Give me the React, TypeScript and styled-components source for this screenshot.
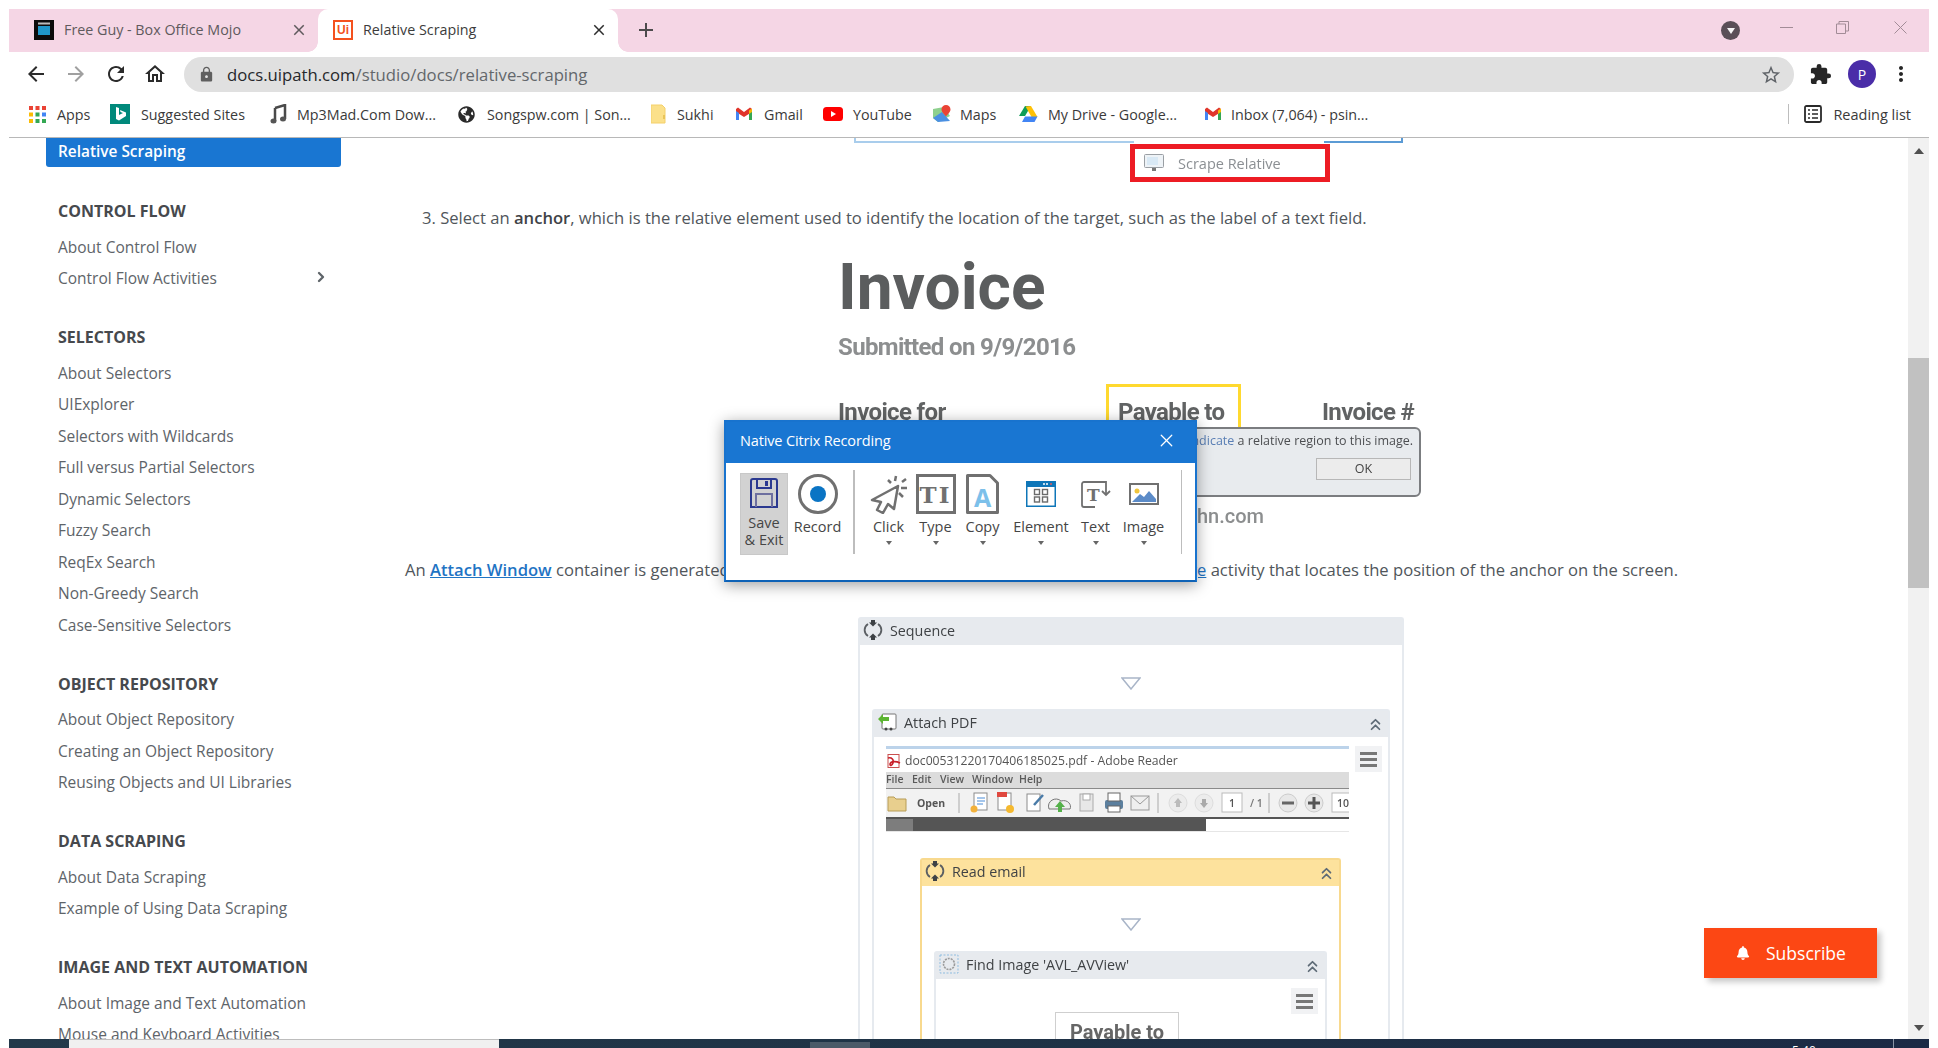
import React from 'react';
import styled, { createGlobalStyle } from 'styled-components';
import {
  MdArrowBack, MdArrowForward, MdRefresh, MdOutlineHome, MdLock, MdStarBorder,
  MdExtension, MdMoreVert, MdAdd, MdClose,
} from 'react-icons/md';
import { FaBell, FaGlobeAmericas } from 'react-icons/fa';
import { ChevronsUp, X, ChevronRight } from 'lucide-react';

const UI = '"Open Sans", "Noto Sans", sans-serif';

const Global = createGlobalStyle`
  html, body { margin: 0; padding: 0; background: #fff; }
  * { box-sizing: border-box; }
  body { font-family: ${UI}; }
`;

const Page = styled.div`
  position: relative; width: 1938px; height: 1048px; overflow: hidden; background: #fff;
  padding: 9px 9px 0; display: flex; flex-direction: column;
`;

/* ---------- tab strip ---------- */
const TabStrip = styled.div`
  height: 43px; background: #f5d6e5; display: flex; align-items: stretch; flex: none;
`;
const Tab = styled.div<{ $active?: boolean; $w: number; $pad: number }>`
  position: relative; width: ${p => p.$w}px; display: flex; align-items: center; padding-left: ${p => p.$pad}px;
  padding-bottom: 2px;
  background: ${p => (p.$active ? '#fff' : 'transparent')};
  border-radius: 10px 10px 0 0;
  color: ${p => (p.$active ? '#3c3c3c' : '#5f5a5d')};
  font-size: 14.3px;
  ${p => p.$active && `
    &::before, &::after { content: ''; position: absolute; bottom: 0; width: 10px; height: 10px; }
    &::before { left: -10px; background: radial-gradient(circle at 0 0, transparent 9.5px, #fff 10px); }
    &::after { right: -10px; background: radial-gradient(circle at 100% 0, transparent 9.5px, #fff 10px); }
  `}
`;
const TabTitle = styled.span<{ $w: number }>`
  width: ${p => p.$w}px; margin-left: 10px; white-space: nowrap; overflow: hidden;
`;
const TabClose = styled.span<{ $c: string }>`
  display: flex; color: ${p => p.$c}; font-size: 18px; margin-left: 2px;
`;
const NewTab = styled.span`
  display: flex; align-items: center; margin-left: 16px; padding-bottom: 2px; font-size: 24px; color: #4d4a4c;
`;
const Favicon = styled.span`
  width: 20px; height: 20px; display: flex; flex: none;
`;
const UiIcon = styled.span`
  width: 20px; height: 20px; flex: none; border: 2px solid #f4511e; color: #f4511e; background: #fff;
  font: 700 12px/16px "Liberation Sans", sans-serif; text-align: center;
`;
const StripEnd = styled.div`
  margin-left: auto; display: flex; align-items: flex-start;
`;
const MediaDot = styled.span`
  width: 19px; height: 19px; border-radius: 50%; background: #5a4f57; margin-top: 12px; margin-right: 40px;
  display: flex; align-items: center; justify-content: center;
  &::after { content: ''; border-style: solid; border-width: 6px 4.5px 0; border-color: #f5f5f5 transparent transparent; }
`;
const WinBtn = styled.span<{ $mr: number }>`
  display: flex; margin-right: ${p => p.$mr}px; margin-top: 12px; width: 13px; height: 13px;
  svg { display: block; }
`;

/* ---------- address row ---------- */
const NavRow = styled.div`
  height: 46px; display: flex; align-items: center; flex: none; background: #fff; padding-left: 15px;
`;
const NavBtn = styled.span<{ $c?: string; $w: number }>`
  width: ${p => p.$w}px; display: flex; font-size: 24px; margin-top: -2px; color: ${p => p.$c || '#2b2b2b'};
`;
const Omnibox = styled.div`
  width: 1610px; height: 35px; margin: -1px 0 0 16px; border-radius: 18px; background: #e0e0e0;
  display: flex; align-items: center; padding-left: 14px; flex: none;
`;
const LockIcon = styled.span`
  display: flex; font-size: 17px; color: #5f5f5f;
`;
const Url = styled.span`
  margin-left: 12px; font-size: 16.7px; color: #63676b; white-space: nowrap;
  b { font-weight: 400; color: #26282b; }
`;
const StarBtn = styled.span`
  margin-left: auto; margin-right: 12px; display: flex; font-size: 22px; color: #5f6368;
`;
const Ext = styled.span`
  display: flex; font-size: 23px; color: #262626; margin-left: 15px; margin-top: -2px;
`;
const Avatar = styled.span`
  width: 28px; height: 28px; border-radius: 50%; background: #4a2da8; color: #fff; margin-left: 16px; margin-top: -2px;
  display: flex; align-items: center; justify-content: center; font-size: 14px;
`;
const Dots = styled.span`
  display: flex; font-size: 24px; color: #262626; margin-left: 13px; margin-top: -2px;
`;

/* ---------- bookmarks ---------- */
const Bookmarks = styled.div`
  height: 40px; flex: none; display: flex; align-items: center; padding-left: 20px; padding-bottom: 7px;
  border-bottom: 1px solid #b8b8b8; background: #fff;
`;
const Bookmark = styled.div<{ $w: number; $slot: number }>`
  width: ${p => p.$w}px; display: grid; grid-template-columns: ${p => p.$slot}px 1fr; align-items: center;
  font-size: 14.3px; color: #3a3a3a; white-space: nowrap;
`;
const BmIcon = styled.span`
  display: flex; width: 20px; height: 20px; align-items: center;
`;
const GlobeIcon = styled(BmIcon)`
  font-size: 17px; color: #2a2a2a;
`;
const ReadingList = styled.div`
  margin-left: auto; display: flex; align-items: center; padding-right: 18px; font-size: 14.5px; color: #3a3a3a;
`;
const ReadingSep = styled.span`
  width: 1px; height: 20px; background: #bdbdbd; margin-right: 15px;
`;
const ReadingIcon = styled.span`
  display: flex; margin-right: 11px;
`;

/* ---------- content ---------- */
const Body = styled.div`
  flex: 1; min-height: 0; display: flex; overflow: hidden;
`;
const Sidebar = styled.nav`
  width: 361px; flex: none; padding-left: 37px;
`;
const ActiveItem = styled.div`
  width: 295px; height: 29px; background: #1976d2; border-radius: 0 0 3px 3px; color: #fff;
  font-size: 15.4px; font-weight: 600; line-height: 28px; padding-left: 12px;
`;
const NavGroup = styled.section<{ $first?: boolean }>`
  margin-top: ${p => (p.$first ? 28 : 26.5)}px; padding-left: 12px; width: 295px;
`;
const NavHead = styled.h4`
  margin: 0 0 4.5px; height: 32px; line-height: 32px; font-size: 16px; font-weight: 700; color: #46494d;
`;
const NavItem = styled.div`
  position: relative; height: 31.5px; line-height: 31.5px; font-size: 15.5px; color: #5e6469; white-space: nowrap;
  display: flex; justify-content: space-between; align-items: center; padding-right: 12px;
`;
const NavChevron = styled.span`
  display: flex; color: #5e6469; margin-top: -4px;
`;
const Main = styled.main`
  flex: 1; min-width: 0; overflow: hidden; color: #50565b; font-size: 16.6px;
`;
const TopCrop = styled.div`
  margin-left: 484px; width: 549px;
`;
const CropEdges = styled.div`
  display: flex; height: 5px;
`;
const CropLeft = styled.div`
  width: 280px; border: solid #a9cdec; border-width: 0 0 2px 2px;
`;
const CropRight = styled.div`
  width: 79px; margin-left: 190px; border: solid #5b9bd5; border-width: 0 2px 2px 0;
`;
const RedBox = styled.div`
  margin: 1px 0 0 276px; width: 200px; height: 38px; border: 5px solid #ed1c24; background: #fff;
  display: flex; align-items: center; padding-left: 9px; color: #8b8f93; font-size: 14.5px;
`;
const RedLabel = styled.span`
  margin-left: 14px; filter: blur(.3px);
`;
const StepLine = styled.p`
  margin: 24px 0 0 52px; line-height: 24px; white-space: nowrap;
  b { font-weight: 600; color: #3f4347; }
`;
const InvoiceFigure = styled.div`
  position: relative; margin-left: 468px; height: 328px; padding-top: 26px; font-family: Roboto, sans-serif; font-weight: 700; filter: blur(.45px);
`;
const InvTitle = styled.div`
  font-size: 64px; line-height: 64px; color: #5b5d5e;
`;
const InvSub = styled.div`
  margin-top: 15px; font-size: 24px; line-height: 24px; color: #8c8e8f; letter-spacing: -0.65px;
`;
const InvRow = styled.div`
  display: flex; margin-top: 25px; height: 50px; font-size: 24px; line-height: 24px; color: #616364; letter-spacing: -0.65px;
`;
const InvCol = styled.div<{ $w?: number; $ml?: number }>`
  ${p => p.$w ? `width:${p.$w}px;` : ''} margin-left: ${p => p.$ml || 0}px; padding-top: 16px; white-space: nowrap;
`;
const PayableBox = styled.div`
  width: 135px; height: 50px; border: solid #ffd92f; border-width: 3px 3px 0; padding: 13px 0 0 9px; white-space: nowrap;
`;
const InvMail = styled.div`
  width: 426px; margin-top: 70px; text-align: right; font-size: 20px; font-weight: 500; line-height: 24px; color: #8c8e8f;
`;
const MiniPopup = styled.div`
  position: absolute; left: 292px; top: 197px; width: 291px; height: 70px; background: #e8ebee;
  border: 2px solid #7b7d80; border-radius: 6px;
  font: 400 12.5px/20px ${UI}; color: #4d4f52; padding: 2px 8px 0 0; text-align: right; white-space: nowrap;
  i { font-style: normal; color: #5a7fb5; }
`;
const MiniOk = styled.div`
  width: 95px; height: 22px; margin: 7px 0 0 auto; background: #ececec; border: 1px solid #b7b7b7;
  line-height: 20px; text-align: center; color: #444; font-size: 12.5px;
`;
const TextLine = styled.p`
  margin: 0 0 0 35px; width: 1273px; height: 24px; line-height: 24px; display: flex; justify-content: space-between; white-space: nowrap;
`;
const DocLink = styled.span<{ $b?: boolean }>`
  color: #1f74c4; text-decoration: underline; font-weight: ${p => (p.$b ? 600 : 400)};
`;
const SeqFigure = styled.div`
  margin: 35px 0 0 488px; width: 546px; filter: blur(.4px); font-size: 14.3px; color: #3f4245;
`;
const Activity = styled.div<{ $gold?: boolean; $ml?: number; $w?: string }>`
  border: 2px solid ${p => (p.$gold ? '#f8d98e' : '#e6eaef')}; border-bottom: 0; border-radius: 3px 3px 0 0; background: #fff;
  margin-left: ${p => p.$ml || 0}px; width: ${p => p.$w || 'auto'};
`;
const ActHead = styled.div<{ $gold?: boolean }>`
  height: 26px; display: flex; align-items: center; padding: 0 3px 4px 3px; gap: 7px;
  background: ${p => (p.$gold ? '#fde29d' : '#e7eaee')};
  svg { flex: none; }
`;
const ActChevron = styled.span`
  margin-left: auto; display: flex; color: #5d6a76; margin-top: 4px;
`;
const ActBody = styled.div<{ $pt: number; $px: number }>`
  padding: ${p => p.$pt}px ${p => p.$px}px 400px;
`;
const DownTri = styled.svg<{ $mb: number }>`
  display: block; margin: 0 auto ${p => p.$mb}px;
`;
const ReaderRow = styled.div`
  display: flex; gap: 6px; align-items: flex-start; margin-bottom: 26px;
`;
const Reader = styled.div`
  width: 463px; flex: none; font-size: 12.2px; color: #555;
`;
const ReaderTop = styled.div`
  height: 26px; border-top: 3px solid #bcd3ea; display: flex; align-items: center; gap: 4px; padding-left: 1px; white-space: nowrap;
`;
const ReaderMenu = styled.div`
  height: 17px; background: #dcdcdc; border-bottom: 1.5px solid #8a8a8a; display: flex; font-weight: 600; font-size: 10.5px; line-height: 15px; color: #5a5a5a;
`;
const MenuItem = styled.span<{ $w: number }>`
  width: ${p => p.$w}px;
`;
const ReaderTools = styled.svg`
  display: block; background: #f2f2f2;
`;
const ReaderDark = styled.div`
  height: 15px; display: flex; border-top: 2px solid #555; border-bottom: 1px solid #e6e6e6;
`;
const DarkSide = styled.div`
  width: 27px; background: #7d7d7d;
`;
const DarkPane = styled.div`
  width: 293px; background: #555;
`;
const Hamburger = styled.div<{ $self?: boolean }>`
  width: 27px; height: 26px; background: #f1f2f4; display: flex; flex-direction: column; justify-content: center; gap: 3px; padding: 0 5px; flex: none;
  ${p => p.$self && 'margin: 0 7px 0 auto;'}
  span { height: 3px; background: #777; }
`;
const SmallShot = styled.div`
  margin: -2px 0 0 119px; width: 124px; height: 60px; border: 1px solid #cfcfcf; text-align: center; padding-top: 7px;
  font: 700 20px/24px Roboto, sans-serif; color: #666;
`;
const Scrollbar = styled.aside`
  width: 21px; flex: none; background: #f1f1f1; display: flex; flex-direction: column; align-items: center; padding-top: 10px;
`;
const ScrollArrow = styled.span<{ $down?: boolean }>`
  border-style: solid; border-color: transparent;
  ${p => p.$down
    ? 'border-width: 6px 5px 0; border-top-color: #505050; margin-top: auto; margin-bottom: 8px;'
    : 'border-width: 0 5px 6px; border-bottom-color: #505050;'}
`;
const ScrollThumb = styled.div`
  width: 100%; height: 230px; margin-top: 204px; background: #c1c1c1;
`;

/* ---------- task bar ---------- */
const Taskbar = styled.div`
  height: 9px; flex: none; display: flex; overflow: hidden; background: linear-gradient(90deg, #23394a, #1f3346 50%, #1c2a45);
`;
const SearchBox = styled.div`
  width: 430px; margin-left: 60px; background: #f0f0f0; border-top: 1px solid #bdbdbd;
`;
const TaskActive = styled.div`
  width: 60px; margin-left: 311px; margin-top: 3px; background: #4b5a68;
`;
const Clock = styled.div`
  margin-left: 922px; padding-top: 5px; width: 48px; color: #fff; font-size: 12px; line-height: 14px;
`;
const TaskEdge = styled.div`
  width: 1px; margin-left: 53px; background: #8a94a5;
`;

/* ---------- overlays ---------- */
const Subscribe = styled.div`
  position: absolute; left: 1704px; top: 928px; width: 173px; height: 50px; background: #fc4714; color: #fff;
  box-shadow: 4px 4px 6px rgba(0,0,0,.22); display: flex; align-items: center; padding-left: 32px; gap: 16px; font-size: 17.5px;
`;
const BellIcon = styled.span`
  display: flex; font-size: 14px;
`;
const Dialog = styled.div`
  position: absolute; left: 724px; top: 420px; width: 473px; height: 162px; background: #fff;
  border: 2px solid #1873ce; border-bottom-color: #0e62b6; box-shadow: 0 3px 14px rgba(0,0,0,.38);
`;
const DialogHead = styled.div`
  height: 41px; background: #1976d2; color: #fff; display: flex; align-items: center; justify-content: space-between;
  padding: 0 18.5px 5px 14px; font-size: 14.5px; letter-spacing: -0.15px;
`;
const DialogBar = styled.div`
  display: flex; align-items: flex-start; padding: 7px 0 0 14px; color: #454545; font-size: 14.5px;
`;
const SaveBtn = styled.div`
  width: 48px; height: 82px; margin-top: 3px; background: #d2d2d2; border: 1px solid #c8c8c8; display: flex; flex-direction: column; align-items: center;
  text-align: center; line-height: 17px; padding-top: 4px;
  svg { display: block; margin-bottom: 6px; flex: none; }
`;
const Tool = styled.div<{ $w: number; $ml?: number }>`
  width: ${p => p.$w}px; margin-left: ${p => p.$ml || 0}px; margin-top: 3px; display: flex; flex-direction: column; align-items: center; white-space: nowrap;
`;
const ToolIcon = styled.div`
  height: 42px; display: flex; align-items: center; justify-content: center;
`;
const ToolLabel = styled.div`
  line-height: 24px; height: 24px;
`;
const Caret = styled.span`
  margin-top: 2px; border-style: solid; border-width: 4.5px 3.5px 0; border-color: #666 transparent transparent;
`;
const BarSep = styled.span<{ $ml: number; $mr: number }>`
  width: 1.5px; height: 84px; background: #bdbdbd; margin: 0 ${p => p.$mr}px 0 ${p => p.$ml}px; flex: none;
`;
const TypeBox = styled.div`
  width: 40px; height: 40px; border: 3px solid #707070; color: #707070; display: flex; align-items: center; justify-content: center;
  font: 700 23px/1 "DejaVu Serif", serif; letter-spacing: 2px;
`;
const SvgText = styled.text`
  font-family: "DejaVu Serif", serif; font-weight: 700;
`;
const CopyLetter = styled.text`
  font-family: "Open Sans", sans-serif; font-weight: 700;
`;

const Seq = () => (
  <svg width="20" height="22" viewBox="0 0 20 22" fill="none" stroke="#5b5f63" strokeWidth="1.8">
    <path d="M5 5 C0.5 8 0.5 14 5 17 M15 5 C19.5 8 19.5 14 15 17" />
    <path d="M10 7.5 L14 3.5 H12 V1 H8 V3.5 H6 Z M10 14.5 L14 18.5 H12 V21 H8 V18.5 H6 Z" fill="#3d4145" stroke="none" />
  </svg>
);
const Chevrons = () => <ActChevron><ChevronsUp size={19} strokeWidth={2.2} /></ActChevron>;
const Tri = ({ w, mb }: { w: number; mb: number }) => (
  <DownTri $mb={mb} width={w} height={13} viewBox="0 0 20 13" fill="none" stroke="#a9b5c8" strokeWidth="1.5">
    <path d="M1 1 H19 L10 12 Z" />
  </DownTri>
);

const sideGroups: { h: string; items: string[] }[] = [
  { h: 'CONTROL FLOW', items: ['About Control Flow', 'Control Flow Activities'] },
  { h: 'SELECTORS', items: ['About Selectors', 'UIExplorer', 'Selectors with Wildcards', 'Full versus Partial Selectors', 'Dynamic Selectors', 'Fuzzy Search', 'ReqEx Search', 'Non-Greedy Search', 'Case-Sensitive Selectors'] },
  { h: 'OBJECT REPOSITORY', items: ['About Object Repository', 'Creating an Object Repository', 'Reusing Objects and UI Libraries'] },
  { h: 'DATA SCRAPING', items: ['About Data Scraping', 'Example of Using Data Scraping'] },
  { h: 'IMAGE AND TEXT AUTOMATION', items: ['About Image and Text Automation', 'Mouse and Keyboard Activities'] },
];

const AppsIcon = () => {
  const c = ['#ea4335', '#ea4335', '#ea4335', '#fbbc05', '#34a853', '#4285f4', '#fbbc05', '#34a853', '#34a853'];
  return (
    <svg width="17" height="17" viewBox="0 0 17 17">
      {c.map((f, i) => <rect key={i} x={(i % 3) * 6.5} y={Math.floor(i / 3) * 6.5} width="4" height="4" fill={f} />)}
    </svg>
  );
};
const GmailIcon = () => (
  <svg width="20" height="20" viewBox="0 0 20 20">
    <path d="M2 5 L4 3.5 L10 8 L16 3.5 L18 5 V8 L10 13 L2 8 Z" fill="#e0352b" />
    <path d="M2 7 V16 H5 V9 Z" fill="#4285f4" />
    <path d="M15 9 V16 H18 V7 Z" fill="#34a853" />
    <path d="M15 6.5 L18 4.5 V8 L15 10 Z" fill="#f6b704" />
  </svg>
);

export default function App() {
  return (
    <Page>
      <Global />
      <TabStrip>
        <Tab $w={309} $pad={25}>
          <Favicon>
            <svg width="20" height="20" viewBox="0 0 20 20"><rect width="20" height="20" fill="#0c0c0c" /><rect x="4" y="6" width="12" height="9" fill="#1f97c9" /><rect x="4" y="2.5" width="12" height="2" fill="#bbb" /></svg>
          </Favicon>
          <TabTitle $w={224}>Free Guy - Box Office Mojo</TabTitle>
          <TabClose $c="#5f5a5d"><MdClose /></TabClose>
        </Tab>
        <Tab $active $w={300} $pad={15}>
          <UiIcon>Ui</UiIcon>
          <TabTitle $w={225}>Relative Scraping</TabTitle>
          <TabClose $c="#2d2d2d"><MdClose /></TabClose>
        </Tab>
        <NewTab><MdAdd /></NewTab>
        <StripEnd>
          <MediaDot />
          <WinBtn $mr={43}><svg width="13" height="13" viewBox="0 0 13 13" stroke="#a28c97" fill="none"><path d="M0 6.5 H13" /></svg></WinBtn>
          <WinBtn $mr={45}><svg width="13" height="13" viewBox="0 0 13 13" stroke="#a28c97" fill="none"><path d="M0.5 3 H9.5 V12.5 H0.5 Z M3 3 V0.5 H12.5 V10 H9.5" /></svg></WinBtn>
          <WinBtn $mr={22}><svg width="13" height="13" viewBox="0 0 13 13" stroke="#a28c97" fill="none"><path d="M0.5 0.5 L12.5 12.5 M12.5 0.5 L0.5 12.5" /></svg></WinBtn>
        </StripEnd>
      </TabStrip>

      <NavRow>
        <NavBtn $w={40}><MdArrowBack /></NavBtn>
        <NavBtn $w={40} $c="#a0a0a0"><MdArrowForward /></NavBtn>
        <NavBtn $w={39}><MdRefresh /></NavBtn>
        <NavBtn $w={25}><MdOutlineHome /></NavBtn>
        <Omnibox>
          <LockIcon><MdLock /></LockIcon>
          <Url><b>docs.uipath.com</b>/studio/docs/relative-scraping</Url>
          <StarBtn><MdStarBorder /></StarBtn>
        </Omnibox>
        <Ext><MdExtension /></Ext>
        <Avatar>P</Avatar>
        <Dots><MdMoreVert /></Dots>
      </NavRow>

      <Bookmarks>
        <Bookmark $w={81} $slot={28}><BmIcon><AppsIcon /></BmIcon><span>Apps</span></Bookmark>
        <Bookmark $w={160} $slot={31}>
          <BmIcon><svg width="20" height="20" viewBox="0 0 20 20"><rect width="20" height="20" fill="#00897b" /><path d="M6 3 L9 4 V11 L13 9 L10.5 8 L10 6 L16 8.5 V12 L9 16.5 L6 15 Z" fill="#fff" /></svg></BmIcon>
          <span>Suggested Sites</span>
        </Bookmark>
        <Bookmark $w={188} $slot={27}>
          <BmIcon><svg width="17" height="20" viewBox="0 0 17 20" fill="none"><path d="M5 4 L15 1 V15" stroke="#4a4a4a" strokeWidth="2.5" /><path d="M5 4 V17" stroke="#4a4a4a" strokeWidth="2.5" /><ellipse cx="3.5" cy="17" rx="3" ry="2.5" fill="#555" /><ellipse cx="13" cy="15" rx="3" ry="2.5" fill="#555" /></svg></BmIcon>
          <span>Mp3Mad.Com Dow...</span>
        </Bookmark>
        <Bookmark $w={193} $slot={29}><GlobeIcon><FaGlobeAmericas /></GlobeIcon><span>Songspw.com | Son...</span></Bookmark>
        <Bookmark $w={83} $slot={26}>
          <BmIcon><svg width="15" height="20" viewBox="0 0 15 20"><path d="M0 1 H11 L14 4 V19 H0 Z" fill="#fbe08a" stroke="#f4d06a" /><rect x="12" y="11" width="2" height="4" fill="#e9c458" /></svg></BmIcon>
          <span>Sukhi</span>
        </Bookmark>
        <Bookmark $w={89} $slot={30}><BmIcon><GmailIcon /></BmIcon><span>Gmail</span></Bookmark>
        <Bookmark $w={109} $slot={30}>
          <BmIcon><svg width="20" height="14" viewBox="0 0 20 14"><rect width="20" height="14" rx="3.5" fill="#f00" /><path d="M8 4 L13 7 L8 10 Z" fill="#fff" /></svg></BmIcon>
          <span>YouTube</span>
        </Bookmark>
        <Bookmark $w={86} $slot={28}>
          <BmIcon><svg width="20" height="20" viewBox="0 0 20 20"><path d="M1 5 L12 3 L18 12 L6 18 L1 14 Z" fill="#8ed08e" /><path d="M1 14 L10 8 L18 17 L6 18 Z" fill="#4a90e2" /><path d="M14 1 a4.5 4.5 0 0 1 4.5 4.5 C18.5 8 15 11 14 12.5 C13 11 9.5 8 9.5 5.5 A4.5 4.5 0 0 1 14 1 Z" fill="#ea4335" /></svg></BmIcon>
          <span>Maps</span>
        </Bookmark>
        <Bookmark $w={185} $slot={30}>
          <BmIcon><svg width="20" height="18" viewBox="0 0 20 18"><path d="M7 1 H13 L7 11 H1 Z" fill="#0f9d58" /><path d="M13 1 L19.5 12 H13.5 L7.5 1.5 Z" fill="#ffc107" /><path d="M4 17 L7 11.5 H19.5 L16.5 17 Z" fill="#4285f4" /></svg></BmIcon>
          <span>My Drive - Google...</span>
        </Bookmark>
        <Bookmark $w={176} $slot={28}><BmIcon><GmailIcon /></BmIcon><span>Inbox (7,064) - psin...</span></Bookmark>
        <ReadingList>
          <ReadingSep />
          <ReadingIcon>
            <svg width="18" height="18" viewBox="0 0 18 18" fill="none" stroke="#2a2a2a"><rect x="1" y="1" width="16" height="16" rx="1.5" strokeWidth="1.8" /><path d="M4 5 H6 M8 5 H14 M4 9 H6 M8 9 H14 M4 13 H6 M8 13 H14" strokeWidth="1.6" /></svg>
          </ReadingIcon>
          Reading list
        </ReadingList>
      </Bookmarks>

      <Body>
        <Sidebar>
          <ActiveItem>Relative Scraping</ActiveItem>
          {sideGroups.map((g, gi) => (
            <NavGroup key={g.h} $first={gi === 0}>
              <NavHead>{g.h}</NavHead>
              {g.items.map(it => (
                <NavItem key={it}>
                  {it}
                  {it === 'Control Flow Activities' && <NavChevron><ChevronRight size={16} strokeWidth={3.5} /></NavChevron>}
                </NavItem>
              ))}
            </NavGroup>
          ))}
        </Sidebar>

        <Main>
          <TopCrop>
            <CropEdges><CropLeft /><CropRight /></CropEdges>
            <RedBox>
              <svg width="20" height="18" viewBox="0 0 20 18" fill="none"><rect x="0.5" y="0.5" width="19" height="13" rx="1" stroke="#9a9fa4" fill="#eef3f7" /><rect x="3" y="3" width="11" height="8" fill="#d9e9f5" /><rect x="8" y="14" width="4" height="3" fill="#777" /></svg>
              <RedLabel>Scrape Relative</RedLabel>
            </RedBox>
          </TopCrop>

          <StepLine>3. Select an <b>anchor</b>, which is the relative element used to identify the location of the target, such as the label of a text field.</StepLine>

          <InvoiceFigure>
            <InvTitle>Invoice</InvTitle>
            <InvSub>Submitted on 9/9/2016</InvSub>
            <InvRow>
              <InvCol $w={268}>Invoice for</InvCol>
              <PayableBox>Payable to</PayableBox>
              <InvCol $ml={81}>Invoice #</InvCol>
            </InvRow>
            <InvMail>john.com</InvMail>
            <MiniPopup>
              Manually <i>indicate</i> a relative region to this image.
              <MiniOk>OK</MiniOk>
            </MiniPopup>
          </InvoiceFigure>

          <TextLine>
            <span>An <DocLink $b>Attach Window</DocLink> container is generated</span>
            <span><DocLink>Find Image</DocLink> activity that locates the position of the anchor on the screen.</span>
          </TextLine>

          <SeqFigure>
            <Activity>
              <ActHead><Seq />Sequence</ActHead>
              <ActBody $pt={32} $px={12}>
                <Tri w={20} mb={19} />
                <Activity>
                  <ActHead>
                    <svg width="20" height="20" viewBox="0 0 20 20" fill="none"><rect x="5" y="2" width="14" height="15" rx="1" stroke="#777" fill="#fff" /><path d="M1 7 L6 2 V5 H12 V9 H6 V12 Z" fill="#5cb531" /><circle cx="9" cy="17" r="1.5" fill="#444" /><circle cx="14" cy="17" r="1.5" fill="#444" /></svg>
                    Attach PDF
                    <Chevrons />
                  </ActHead>
                  <ActBody $pt={9} $px={12}>
                    <ReaderRow>
                      <Reader>
                        <ReaderTop>
                          <svg width="14" height="14" viewBox="0 0 14 14" fill="none"><rect x="1" y="0.5" width="11" height="13" fill="#fff" stroke="#c9504f" /><path d="M1 4 C5 3 7 6 6 9 C5 12 3 12 3 10 C4 7 9 7 13 9" stroke="#c8202a" strokeWidth="1.6" /></svg>
                          doc00531220170406185025.pdf - Adobe Reader
                        </ReaderTop>
                        <ReaderMenu>
                          <MenuItem $w={26}>File</MenuItem>
                          <MenuItem $w={28}>Edit</MenuItem>
                          <MenuItem $w={32}>View</MenuItem>
                          <MenuItem $w={47}>Window</MenuItem>
                          <MenuItem $w={30}>Help</MenuItem>
                        </ReaderMenu>
                        <ReaderTools width="463" height="28" viewBox="0 0 463 28" fontFamily="Open Sans" fontSize="10.5" fill="#555">
                          <path d="M2 8 H8 L10 10 H20 V22 H2 Z" fill="#e8cf8e" stroke="#b79c56" />
                          <text x="31" y="18" fontWeight="700">Open</text>
                          <path d="M73 4 V24 M272 4 V24 M383 4 V24" stroke="#aaa" />
                          <rect x="88" y="4" width="13" height="17" fill="#fff" stroke="#8c8c8c" />
                          <path d="M91 9 H99 M91 12 H99 M91 15 H97" stroke="#4a8dd8" />
                          <circle cx="88" cy="20" r="3.5" fill="#f2b13b" />
                          <rect x="112" y="4" width="13" height="17" fill="#fff" stroke="#8c8c8c" />
                          <rect x="111" y="3" width="10" height="5" fill="#e0483f" />
                          <circle cx="124" cy="20" r="4" fill="#f5b92f" />
                          <rect x="141" y="5" width="13" height="17" fill="#fff" stroke="#8c8c8c" />
                          <path d="M148 16 L157 6" stroke="#4a7ba8" strokeWidth="2.5" />
                          <path d="M163 20 C160 12 170 7 175 12 C182 10 186 16 184 20 Z" fill="#eee" stroke="#777" />
                          <path d="M174 12 L179 18 H176 V23 H172 V18 H169 Z" fill="#54b04a" />
                          <rect x="194" y="5" width="13" height="17" fill="#e7e7e7" stroke="#aaa" />
                          <rect x="197" y="5" width="7" height="6" fill="#fff" stroke="#aaa" />
                          <rect x="219" y="11" width="18" height="9" rx="2" fill="#5b7f9e" />
                          <rect x="222" y="4" width="12" height="8" fill="#fff" stroke="#666" />
                          <rect x="222" y="17" width="12" height="6" fill="#fff" stroke="#666" />
                          <rect x="245" y="7" width="18" height="14" fill="#efefef" stroke="#999" />
                          <path d="M245 7 L254 15 L263 7" fill="none" stroke="#999" />
                          <circle cx="292" cy="14" r="9" fill="#ececec" stroke="#ddd" />
                          <path d="M292 9 L296 14 H294 V18 H290 V14 H288 Z" fill="#bbb" />
                          <circle cx="318" cy="14" r="9" fill="#ececec" stroke="#ddd" />
                          <path d="M318 19 L322 14 H320 V10 H316 V14 H314 Z" fill="#aaa" />
                          <rect x="336" y="4" width="20" height="19" fill="#fff" stroke="#bbb" />
                          <text x="343" y="18" fontWeight="600">1</text>
                          <text x="364" y="18" fontWeight="600" fill="#777">/ 1</text>
                          <circle cx="402" cy="14" r="9" fill="#e8e8e8" stroke="#ccc" />
                          <rect x="396" y="12.5" width="12" height="3" fill="#666" />
                          <circle cx="428" cy="14" r="9" fill="#e8e8e8" stroke="#ccc" />
                          <path d="M422 12.5 H426.5 V8 H429.5 V12.5 H434 V15.5 H429.5 V20 H426.5 V15.5 H422 Z" fill="#555" />
                          <rect x="446" y="4" width="20" height="19" fill="#fff" stroke="#bbb" />
                          <text x="451" y="18" fontWeight="600">10</text>
                        </ReaderTools>
                        <ReaderDark><DarkSide /><DarkPane /></ReaderDark>
                      </Reader>
                      <Hamburger><span /><span /><span /></Hamburger>
                    </ReaderRow>
                    <Activity $gold $ml={34} $w="421px">
                      <ActHead $gold><Seq />Read email<Chevrons /></ActHead>
                      <ActBody $pt={32} $px={12}>
                        <Tri w={20} mb={20} />
                        <Activity $w="393px">
                          <ActHead>
                            <svg width="20" height="20" viewBox="0 0 20 20" fill="none"><rect x="1" y="1" width="18" height="18" stroke="#8fbde0" strokeDasharray="2 1.5" /><circle cx="10" cy="10" r="5.5" stroke="#9a9a9a" strokeWidth="1.6" strokeDasharray="2 1" /></svg>
                            Find Image 'AVL_AVView'
                            <Chevrons />
                          </ActHead>
                          <ActBody $pt={9} $px={0}>
                            <Hamburger $self><span /><span /><span /></Hamburger>
                            <SmallShot>Payable to</SmallShot>
                          </ActBody>
                        </Activity>
                      </ActBody>
                    </Activity>
                  </ActBody>
                </Activity>
              </ActBody>
            </Activity>
          </SeqFigure>
        </Main>

        <Scrollbar>
          <ScrollArrow />
          <ScrollThumb />
          <ScrollArrow $down />
        </Scrollbar>
      </Body>

      <Taskbar>
        <SearchBox />
        <TaskActive />
        <Clock>5:40</Clock>
        <TaskEdge />
      </Taskbar>

      <Subscribe><BellIcon><FaBell /></BellIcon>Subscribe</Subscribe>

      <Dialog>
        <DialogHead>Native Citrix Recording<X size={21} strokeWidth={1.4} /></DialogHead>
        <DialogBar>
          <SaveBtn>
            <svg width="28" height="30" viewBox="0 0 28 30" fill="none" stroke="#2b3990" strokeWidth="2"><path d="M1 3 a2 2 0 0 1 2 -2 H25 a2 2 0 0 1 2 2 V29 H1 Z" /><path d="M7 1 V10 H21 V1" /><rect x="15" y="3" width="3" height="5" fill="#2b3990" stroke="none" /><path d="M6 29 V16 H22 V29" stroke="#6d6f9f" /></svg>
            Save<br />&amp; Exit
          </SaveBtn>
          <Tool $w={55} $ml={2}>
            <ToolIcon>
              <svg width="40" height="40" viewBox="0 0 40 40"><circle cx="20" cy="20" r="18.5" fill="#fff" stroke="#707070" strokeWidth="3" /><circle cx="20" cy="20" r="8" fill="#0a74c4" /></svg>
            </ToolIcon>
            <ToolLabel>Record</ToolLabel>
          </Tool>
          <BarSep $ml={8} $mr={9} />
          <Tool $w={50}>
            <ToolIcon>
              <svg width="38" height="39" viewBox="0 0 38 39" fill="none" stroke="#707070"><path d="M28 11 L2 25 L11 27 L7 35 L13 38 L18 29 L24 34 Z" fill="#fff" strokeWidth="2.5" strokeLinejoin="round" /><path d="M18 5 L21 8 M26 1 L25 6 M36 4 L32 7 M31 13 H37 M29 18 L33 22" strokeWidth="2.5" /></svg>
            </ToolIcon>
            <ToolLabel>Click</ToolLabel>
            <Caret />
          </Tool>
          <Tool $w={44}>
            <ToolIcon><TypeBox>TI</TypeBox></ToolIcon>
            <ToolLabel>Type</ToolLabel>
            <Caret />
          </Tool>
          <Tool $w={50}>
            <ToolIcon>
              <svg width="33" height="40" viewBox="0 0 33 40" fill="none"><path d="M1.5 1.5 H24 L31.5 9 V38.5 H1.5 Z" stroke="#707070" strokeWidth="3" strokeLinejoin="round" /><CopyLetter x="16.5" y="33" fontSize="25" fill="#7cc0ea" textAnchor="middle">A</CopyLetter></svg>
            </ToolIcon>
            <ToolLabel>Copy</ToolLabel>
            <Caret />
          </Tool>
          <Tool $w={67}>
            <ToolIcon>
              <svg width="30" height="26" viewBox="0 0 30 26"><rect width="30" height="26" fill="#0f76b8" /><rect x="1.5" y="6" width="27" height="18.5" fill="#fff" /><path d="M17 3 h2 M20 3 h2" stroke="#fff" strokeWidth="1.6" /><path d="M24 3 h2" stroke="#e25b5b" strokeWidth="1.6" /><g fill="none" stroke="#6b6b6b" strokeWidth="1.4"><rect x="8.5" y="8.5" width="5" height="5" /><rect x="16.5" y="8.5" width="5" height="5" /><rect x="8.5" y="16" width="5" height="5" /><rect x="16.5" y="16" width="5" height="5" /></g></svg>
            </ToolIcon>
            <ToolLabel>Element</ToolLabel>
            <Caret />
          </Tool>
          <Tool $w={42}>
            <ToolIcon>
              <svg width="30" height="29" viewBox="0 0 30 29" fill="none" stroke="#707070" strokeWidth="1.8"><path d="M23 2 H3 a2 2 0 0 0 -2 2 V25 a2 2 0 0 0 2 2 H14 M20 2 H25 V14" /><path d="M21 11 L25 15 L29 11" /><SvgText x="6" y="21" fontSize="17" fill="#707070" stroke="none">T</SvgText></svg>
            </ToolIcon>
            <ToolLabel>Text</ToolLabel>
            <Caret />
          </Tool>
          <Tool $w={54}>
            <ToolIcon>
              <svg width="30" height="22" viewBox="0 0 30 22"><rect x="1" y="1" width="28" height="20" fill="#fff" stroke="#707070" strokeWidth="2" /><circle cx="8" cy="8" r="2.5" fill="#f0c53c" /><path d="M3 19 L11 11 L15 14 L20 8 L27 16 V19 Z" fill="#5b8bc8" /></svg>
            </ToolIcon>
            <ToolLabel>Image</ToolLabel>
            <Caret />
          </Tool>
          <BarSep $ml={10} $mr={0} />
        </DialogBar>
      </Dialog>
    </Page>
  );
}
